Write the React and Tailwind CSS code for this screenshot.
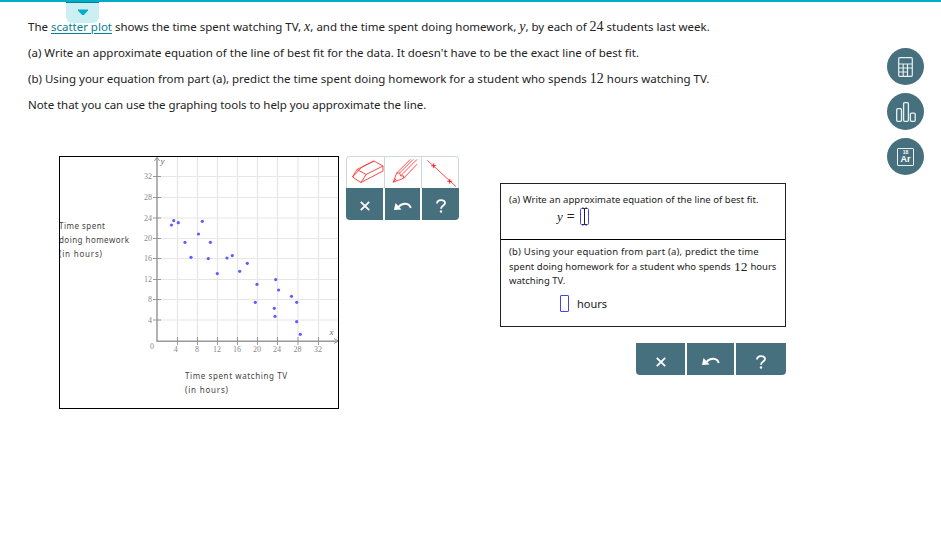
import React from "react";

const points = [
  [171.5, 225], [173.7, 220.6], [178.3, 222.7], [185, 242.3], [191, 257.3], [198.5, 234],
  [202.3, 221.3], [210.4, 242.3], [208.3, 258.6], [217.3, 273.6], [227, 258], [232.3, 255.6],
  [247.3, 263.3], [239.7, 271.3], [257, 284.3], [275.7, 279.6], [278.6, 290], [291.5, 296.3],
  [255.3, 302.3], [296.7, 302.3], [274.3, 308.3], [275, 316.3], [296.7, 321.7], [300.3, 334.3],
];
const xTicks = [[4, 177.5], [8, 197.5], [12, 217.5], [16, 237.5], [20, 257.5], [24, 277.5], [28, 298], [32, 318.5]];
const yTicks = [[32, 176.5], [28, 197.5], [24, 218], [20, 238.5], [16, 258.5], [12, 279.5], [8, 299.5], [4, 320]];

const serif = "font-['Liberation_Serif',serif]";

function Chart() {
  return (
    <svg className="block" width="280" height="253" viewBox="59 156 280 253">
      <g stroke="#e6e6e6" strokeWidth="1.2">
        {xTicks.map(([n, x]) => <line key={n} x1={x} x2={x} y1="157" y2="341" />)}
        {yTicks.map(([n, y]) => <line key={n} x1="157" x2="338" y1={y} y2={y} />)}
      </g>
      <g stroke="#999" fill="none">
        <path d="M157 158V341.2H338" strokeWidth="1.5" />
        <path d="M154.5 161l2.5-4 2.5 4M334 338.5l4.5 2.5-4.5 2.5" />
        {xTicks.map(([n, x]) => <line key={n} x1={x} x2={x} y1="337" y2="345" />)}
        {yTicks.map(([n, y]) => <line key={n} x1="153" x2="161" y1={y} y2={y} />)}
      </g>
      <g className={serif} fill="#888" fontSize="8">
        {xTicks.map(([n, x]) => <text key={n} x={x - (n === 4 ? 1.7 : 0.4)} y="351.5" textAnchor="middle">{n}</text>)}
        {yTicks.map(([n, y]) => <text key={n} x="152" y={y + 2.5} textAnchor="end">{n}</text>)}
        <text x="150" y="349">0</text>
        <text x="160.5" y="164" fontSize="9" fontStyle="italic" fill="#666">y</text>
        <text x="329.5" y="335" fontSize="9" fontStyle="italic" fill="#666">x</text>
      </g>
      <g fill="#5c5cff">
        {points.map(([x, y], i) => <circle key={i} cx={x} cy={y} r="1.6" />)}
      </g>
      <g className="font-['Noto_Sans',sans-serif]" fill="#444" fontSize="8">
        <text x="59" y="229" textLength="46">Time spent</text>
        <text x="59" y="243" textLength="70">doing homework</text>
        <text x="59" y="257" textLength="43">(in hours)</text>
        <text x="185" y="379" textLength="102">Time spent watching TV</text>
        <text x="185" y="393" textLength="43">(in hours)</text>
      </g>
      <rect x="59.5" y="156.5" width="279" height="252" fill="none" stroke="#000" />
    </svg>
  );
}

function CloseIcon() {
  return (
    <svg width="10" height="10" viewBox="0 0 10 10" fill="none" stroke="#fff" strokeWidth="1.8">
      <path d="M0.800 0.800l8.400 8.400M9.200 0.800l-8.400 8.400" />
    </svg>
  );
}
function UndoIcon() {
  return (
    <svg width="18" height="9" viewBox="0 0 18 9">
      <path d="M4.500 5C8 0.500 15.500 0.500 16.700 6" fill="none" stroke="#fff" strokeWidth="2" />
      <path d="M0 8L1.500 1L7.500 7.600z" fill="#fff" />
    </svg>
  );
}
function HelpIcon() {
  return (
    <svg width="10" height="14" viewBox="0 0 10 14">
      <path d="M1 4.500C1 0 9 0 9 4C9 6.600 5 6.300 5 9.700" fill="none" stroke="#fff" strokeWidth="1.800" />
      <circle cx="5" cy="12.500" r="1.200" fill="#fff" />
    </svg>
  );
}

function Tool({ children, className }) {
  return <div className={`flex h-8 items-center justify-center bg-[#46707e] ${className}`}>{children}</div>;
}

function GraphTools() {
  return (
    <div className="w-[113px]">
      <div className="grid h-8 grid-cols-[37px_37px_37px] overflow-hidden rounded-t border border-b-0 border-[#cfd9dc]">
        <svg width="37" height="31" viewBox="347 157 37 31" fill="none" stroke="#f33" strokeWidth="0.900">
          <path d="M352.500 177L362 167L374 161L383 166V171L361 182.500zM352.500 177L357 169.500L366 174.500L361 182.500M366 174.500L383 166M357 169.500L374 161" />
        </svg>
        <svg className="border-l border-[#cfd9dc]" width="37" height="31" viewBox="385 157 37 31" fill="none" stroke="#f33" strokeWidth="0.900">
          <path d="M393.500 182.500L397 173L411 159M393.500 182.500L404 178.500L418 164M397 173L400 173L401 176L404 176L404 178.500M400 173L414 159M401 176L418 159M393.500 182.500L395.500 179L396.500 181" />
        </svg>
        <svg className="border-l border-[#cfd9dc]" width="37" height="31" viewBox="421 157 37 31" fill="none" stroke="#f33" strokeWidth="0.900">
          <path d="M426.500 160L456 187" />
          <path d="M430.500 165.500h5M433 163v5M447 181.500h5M449.500 179v5" stroke="#e11" />
        </svg>
      </div>
      <div className="grid grid-cols-[37px_35px_37px] gap-x-0.5 overflow-hidden rounded-b bg-white">
        <Tool className="pt-1"><CloseIcon /></Tool>
        <Tool className="pt-1"><UndoIcon /></Tool>
        <Tool className="pt-1"><HelpIcon /></Tool>
      </div>
    </div>
  );
}

function Answers() {
  return (
    <div className="h-36 w-[286px] border border-[#222] font-['Noto_Sans',sans-serif] text-[9.5px] leading-[14px] text-[#222]">
      <div className="h-14 border-b border-black pl-2 pt-[9px]">
        <p className="whitespace-nowrap tracking-[0.04px]">(a) Write an approximate equation of the line of best fit.</p>
        <div className="flex items-center gap-1 pl-[48px]">
          <span className={`${serif} text-[13px] italic`}>y</span>
          <span className={`${serif} text-[14px] font-bold`}>=</span>
          <svg className="ml-px" width="9" height="19" viewBox="0 0 9 19" fill="none">
            <rect x="0.500" y="1.500" width="8" height="16" rx="1" stroke="#4444ee" />
            <path d="M4.500 2v15M2 1q2.500 0 2.500 1q0-1 2.500-1M2 18q2.500 0 2.500-1q0 1 2.500 1" stroke="#222" />
          </svg>
        </div>
      </div>
      <div className="pl-2 pt-[5px]">
        <p className="whitespace-nowrap tracking-[0.19px]">(b) Using your equation from part (a), predict the time</p>
        <p className="flex h-[15px] items-center gap-[3px] whitespace-nowrap">
          <span className="tracking-[0.05px]">spent doing homework for a student who spends</span>
          <span className={`${serif} text-[13.500px]`}>12</span>
          <span>hours</span>
        </p>
        <p className="whitespace-nowrap">watching TV.</p>
        <div className="mt-[7px] flex items-center gap-2 pl-[51px]">
          <div className="h-[17px] w-[9px] rounded-[1px] border border-[#4444ee]" />
          <span className="text-[11px]">hours</span>
        </div>
      </div>
    </div>
  );
}

function Math({ children, className = "" }) {
  return <span className={`${serif} text-[14px] leading-none tracking-normal ${className}`}>{children}</span>;
}

function Round({ children }) {
  return <div className="flex size-[37px] items-center justify-center rounded-full bg-[#46707e]">{children}</div>;
}

function Sidebar() {
  return (
    <aside className="mt-[46px] flex w-[37px] flex-col gap-2">
      <Round>
        <svg width="15" height="20" viewBox="0 0 15 20" fill="none" stroke="#e8f0f2" strokeWidth="1.200">
          <rect x="0.700" y="0.700" width="13.600" height="18.600" rx="1" />
          <path d="M1 7h13M1 11h13M1 15h8.500M5.200 7v12M9.500 7v12" />
        </svg>
      </Round>
      <Round>
        <svg width="20" height="20" viewBox="0 0 20 20" fill="none" stroke="#e8f0f2" strokeWidth="1.300">
          <rect x="0.700" y="6.700" width="4.800" height="12.600" rx="1" />
          <rect x="7.600" y="0.700" width="4.800" height="18.600" rx="1" />
          <rect x="14.400" y="11.200" width="4.800" height="8.100" rx="1" />
        </svg>
      </Round>
      <Round>
        <div className="flex h-[18px] w-[17px] flex-col items-center rounded-[1px] border border-[#e8f0f2] pt-px font-['Liberation_Sans',sans-serif] font-bold text-white">
          <span className="text-[5px] leading-[5px]">18</span>
          <span className="text-[9px] leading-[9px]">Ar</span>
        </div>
      </Round>
    </aside>
  );
}

export default function App() {
  return (
    <div className="relative h-[533px] w-[941px] overflow-hidden border-t-2 border-[#00adc9] bg-white">
      <button className="absolute left-[66px] top-0 flex h-[21px] w-[33px] justify-center rounded-b-md border-t border-[#087f91] bg-[#cceff4] pt-[6px]">
        <svg width="10" height="7" viewBox="0 0 10 7"><path d="M0 0.500h10v1L6 6H4L0 1.500z" fill="#00adc9" /></svg>
      </button>
      <div className="flex pl-7">
        <main className="relative w-[859px] pt-3">
          <section className="font-['Noto_Sans',sans-serif] text-[11.5px] leading-[26px] text-[#222] *:h-[26px] *:whitespace-nowrap">
            <p className="tracking-[-0.01px]">The <a className="text-[#087f91] underline underline-offset-2">scatter plot</a> shows the time spent watching TV, <Math className="italic">x</Math>, and the time spent doing homework, <Math className="italic">y</Math>, by each of <Math>24</Math> students last week.</p>
            <p>(a) Write an approximate equation of the line of best fit for the data. It doesn't have to be the exact line of best fit.</p>
            <p>(b) Using your equation from part (a), predict the time spent doing homework for a student who spends <Math>12</Math> hours watching TV.</p>
            <p className="tracking-[-0.06px]">Note that you can use the graphing tools to help you approximate the line.</p>
          </section>
          <section className="mt-[38px] flex items-start pl-[31px]">
            <Chart />
            <div className="ml-[7px]"><GraphTools /></div>
            <div className="ml-[41px] mt-[27px]">
              <Answers />
              <div className="ml-[136px] mt-4 grid w-[150px] grid-cols-[49px_47px_50px] gap-0.5 overflow-hidden rounded-b">
                <Tool className="pt-[5px]"><CloseIcon /></Tool>
                <Tool className="pt-[5px]"><UndoIcon /></Tool>
                <Tool className="pt-[5px]"><HelpIcon /></Tool>
              </div>
            </div>
          </section>
        </main>
        <Sidebar />
      </div>
    </div>
  );
}
